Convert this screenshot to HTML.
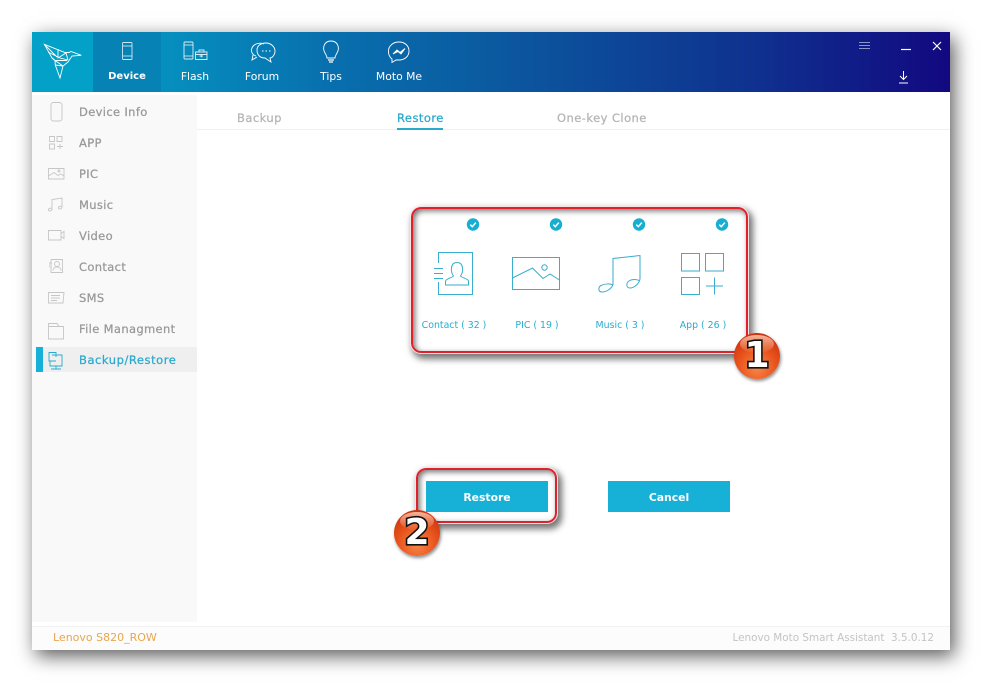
<!DOCTYPE html>
<html><head><meta charset="utf-8"><style>
html,body{margin:0;padding:0;background:#fff}
body{width:982px;height:682px;position:relative;overflow:hidden;font-family:"DejaVu Sans","Liberation Sans",sans-serif}
.a{position:absolute;white-space:nowrap}
#win{left:32px;top:32px;width:918px;height:618px;background:#fff;box-shadow:4px 6px 18px rgba(0,0,0,.65)}
#hd{left:32px;top:32px;width:918px;height:60px;background:linear-gradient(90deg,#02a4c9 0%,#0590bf 14%,#0870ae 32%,#0b5aa0 50%,#0f2f8e 80%,#120880 100%)}
#logo{left:32px;top:32px;width:61px;height:60px;background:#03a1c8}
#tab{left:93px;top:32px;width:68px;height:60px;background:#0682b4}
.t{top:70px;color:#fff;font-size:10.8px;text-align:center;transform:translateX(-50%)}
#side{left:32px;top:95px;width:165px;height:527px;background:#f9f9f9}
#sel{left:36px;top:347px;width:161px;height:25px;background:#efefef}
#bar{left:36px;top:347px;width:7px;height:25px;background:#17b0d6}
.s{left:79px;font-size:11.5px;letter-spacing:.35px;color:#999;-webkit-text-stroke:.25px #999}
.tb{top:111px;font-size:11.5px;letter-spacing:.45px;color:#b4b4b4;-webkit-text-stroke:.25px #b4b4b4}
#line{left:197px;top:129px;width:753px;height:1px;background:#eef0f2}
.l{top:320px;font-size:9.4px;color:#25add0;transform:translateX(-50%)}
.btn{top:481px;width:122px;height:31px;background:#17b0d6;color:#fff;font-size:10.8px;font-weight:bold;line-height:33px;text-align:center}
#ft{left:32px;top:626px;width:918px;height:24px;background:#fcfcfc;border-top:1px solid #f2f2f2;box-sizing:border-box}
.frame{box-sizing:border-box;border:2px solid #e0202a;outline:1px solid #f6e3e4;border-radius:10px;box-shadow:3px 4px 7px 2px rgba(0,0,0,.55),inset 2px 2px 6px rgba(0,0,0,.55)}
.badge{width:46px;height:46px;border-radius:50%;background:radial-gradient(circle at 50% 75%,#f8874a 0%,#e8541c 45%,#c92f0c 85%,#b52808 100%);box-shadow:1px 2px 3px rgba(0,0,0,.45);overflow:hidden}
.badge i{position:absolute;left:6px;top:2px;width:34px;height:18px;border-radius:50%;background:linear-gradient(#f9b59a,rgba(240,110,60,.2))}
.badge b{position:absolute;left:0;top:0;width:46px;text-align:center;font:bold 36px/46px "DejaVu Sans",sans-serif;color:#fff;-webkit-text-stroke:3.2px #111;paint-order:stroke}
</style></head><body>
<div class="a" id="win"></div>
<div class="a" id="hd"></div>
<div class="a" id="logo"></div>
<div class="a" id="tab"></div>
<svg class="a" style="left:0;top:0" width="982" height="682" fill="none" stroke="#fff" stroke-width="1">
<g stroke-width=".9">
<path d="M44.300 44.300L65 52.500L69 52.500L71 51.500L81.300 55.300L72 56L68 62L63 66L60 78L55.300 65L55 60.500L52 58Z"/>
<path d="M44.300 44.300L57 57M48 52L60 58L68 60M52 58L55 60.500L67 60.500M58 49L58 58L66 53L68 60M55.300 65L63 66M55 60.500L63 66"/>
<rect x="122.500" y="42.500" width="9.500" height="17" rx="1" opacity=".8"/>
<path d="M123 46H132M123 56H132" opacity=".7"/>
<rect x="184" y="42" width="9" height="17" rx="1" opacity=".85"/>
<path d="M184 45H193M184 56H193" opacity=".7"/>
<path d="M195.500 52H207V59.500H195.500ZM199 52V50H204V52M195.500 54.500H207M201.300 54V57.500M199.500 56H203" opacity=".85"/>
<path d="M256 56C250 54 250 47 256 44C259 43 262 43 264 44M253 55L252 60L257 57"/>
<path d="M257 50C257 45 262 43 266 43C271 43 275 47 275 51C275 55 272 58 270 58L271 62L265 58C260 58 257 55 257 50Z"/>
<path d="M262 51h1.500M265.500 51h1.500M269 51h1.500" stroke-width="1"/>
<path d="M325 53C322 48 324 41 331 41C338 41 340 48 337 53C336 55 335 56 335 58H327C327 56 326 55 325 53Z"/>
<path d="M328 60H334M329 62H333" stroke-width="1.300"/>
<path d="M392 59C388 56 388.500 51 388.500 51C388.500 46 393 42 399 42C405 42 409 46 409 51C409 56 405 60 399 60H396L392 62.500Z"/>
<path d="M393 54L397 50L400 52.500L405 48.500L401 54L398 51.500Z" fill="#fff"/>
</g>
<path d="M859 42.500H870M859 45.500H870M859 48.500H870" stroke="#8b93c8" stroke-width=".9"/>
<path d="M901 49.500H911" stroke-width="1.200"/>
<path d="M933 42L941 50M941 42L933 50" stroke-width="1.200"/>
<path d="M903.500 71V79M900 76L903.500 79.500L907 76M899 83H908" stroke-width="1"/>
</svg>
<div class="a t" style="left:127px;font-weight:bold;font-size:10px;top:71px">Device</div>
<div class="a t" style="left:195px">Flash</div>
<div class="a t" style="left:262px">Forum</div>
<div class="a t" style="left:331px">Tips</div>
<div class="a t" style="left:399px">Moto Me</div>
<div class="a" id="side"></div>
<div class="a" id="sel"></div>
<div class="a" id="bar"></div>
<div class="a s" style="top:105px">Device Info</div>
<div class="a s" style="top:136px">APP</div>
<div class="a s" style="top:167px">PIC</div>
<div class="a s" style="top:198px">Music</div>
<div class="a s" style="top:229px">Video</div>
<div class="a s" style="top:260px">Contact</div>
<div class="a s" style="top:291px">SMS</div>
<div class="a s" style="top:322px">File Managment</div>
<div class="a s" style="top:353px;letter-spacing:.55px;color:#2aa9cf;-webkit-text-stroke:.25px #2aa9cf">Backup/Restore</div>
<svg class="a" style="left:0;top:0" width="982" height="682" fill="none" stroke="#c6c6c6" stroke-width=".9">
<rect x="51" y="102.500" width="11" height="18.500" rx="2.500"/>
<path d="M49.500 136.500h5v5h-5zM57 136.500h5v5h-5zM49.500 144h5v5h-5zM57 146.500h6M60 144v5"/>
<path d="M48.500 168.500H64V179H48.500ZM48.500 176L54 172.500L58 175.500L61 174L64 176"/>
<circle cx="59" cy="171" r="1"/>
<path d="M52 209V199.500L62 198V207M52 209C52 211 48.500 212 48.500 210C48.500 208 52 207.500 52 209ZM62 207C62 209 58.500 210 58.500 208C58.500 206 62 205.500 62 207Z"/>
<path d="M48.500 230.500H61V240H48.500ZM61 233.500L64 231.500V238.500L61 236.500"/>
<path d="M51 259.500H62.500V272.500H51V268M51 264V259.500M49 263h3M49 265h3M49 267h3"/>
<circle cx="57" cy="264" r="2.500"/>
<path d="M53 270.500C53 267.500 55 267.500 56 267H58C59 267.500 61 267.500 61 270.500"/>
<path d="M48.500 292.500H64L63 303H48.500ZM51 295.500H60M51 298H60M51 300.500H57"/>
<path d="M48.500 326.500H63.500V339H48.500ZM48.500 326.500V323.500H57L59 326.500"/>
<g stroke="#2aa9cf">
<path d="M49 352V361H56M49 352.500H56V357M52 355H62V366H50V361M56 366V369H60M51 369H61"/>
</g>
<path d="M169.500 639C167.500 637 168 633.500 170.500 633.500C173 633.500 173.500 637 171.500 639V642.500H169.500Z" stroke="#e8a64c"/>
</svg>
<div class="a tb" style="left:237px">Backup</div>
<div class="a tb" style="left:397px;color:#2aa9cf;-webkit-text-stroke:.25px #2aa9cf">Restore</div>
<div class="a tb" style="left:557px">One-key Clone</div>
<div class="a" id="line"></div>
<div class="a" style="left:397px;top:128px;width:46px;height:2px;background:#2aa9cf"></div>

<div class="a frame" style="left:411px;top:207px;width:337px;height:146px"></div>
<svg class="a" style="left:0;top:0" width="982" height="682" fill="none" stroke="#39aecd" stroke-width="1">
<g>
<circle cx="473" cy="224.500" r="6.200" fill="#17aed4" stroke="none"/><circle cx="556" cy="224.500" r="6.200" fill="#17aed4" stroke="none"/><circle cx="639" cy="224.500" r="6.200" fill="#17aed4" stroke="none"/><circle cx="722" cy="224.500" r="6.200" fill="#17aed4" stroke="none"/>
<path d="M470.300 224.700L472.300 226.700L475.800 222.600M553.300 224.700L555.300 226.700L558.800 222.600M636.300 224.700L638.300 226.700L641.800 222.600M719.300 224.700L721.300 226.700L724.800 222.600" stroke="#fff" stroke-width="1.500"/>
</g>
<path d="M438.500 263V252.500H472.500V294.500H438.500V282"/>
<path d="M434 268.500H443M434 273.500H443M434 278.500H443"/>
<path d="M445.500 285V281C446 278.500 452 278 453.500 276C450.500 272 450 262.500 457 262.500C464 262.500 463.500 272 460.500 276C462 278 468 278.500 468.500 281V285Z"/>
<rect x="512.500" y="257.500" width="47" height="32"/>
<path d="M512.500 278L532.500 268L543 278.500L550 274L559.500 280"/>
<circle cx="544.500" cy="267.500" r="2.700"/>
<path d="M613 285V258.500L640 255.500V279"/>
<path d="M613 284C612 289 606 292 602 292C598 292 598 287 601 285.500C605 283.500 610 283.500 613 285"/>
<path d="M640 279C639 284 634 288 630 288C626 288 626 283 629 281C632 279 637 279 640 281"/>
<rect x="681.500" y="253.500" width="18" height="17.500"/>
<rect x="705.500" y="253.500" width="18" height="17.500"/>
<rect x="681.500" y="277.500" width="18" height="17"/>
<path d="M706 286H723M714.500 277.500V294.500"/>
</svg>
<div class="a l" style="left:454px">Contact ( 32 )</div>
<div class="a l" style="left:537px">PIC ( 19 )</div>
<div class="a l" style="left:620px">Music ( 3 )</div>
<div class="a l" style="left:703px">App ( 26 )</div>

<div class="a frame" style="left:416px;top:468px;width:141px;height:55px"></div>
<div class="a btn" style="left:426px">Restore</div>
<div class="a btn" style="left:608px">Cancel</div>

<div class="a badge" style="left:734px;top:333px"><i></i><b>1</b></div>
<div class="a badge" style="left:394px;top:510px"><i></i><b>2</b></div>

<div class="a" id="ft"></div>
<div class="a" style="left:53px;top:631px;font-size:11px;color:#e8a64c">Lenovo S820_ROW</div>
<div class="a" style="right:48px;top:632px;font-size:10.4px;color:#c4c4c4">Lenovo Moto Smart Assistant &nbsp;3.5.0.12</div>
</body></html>
